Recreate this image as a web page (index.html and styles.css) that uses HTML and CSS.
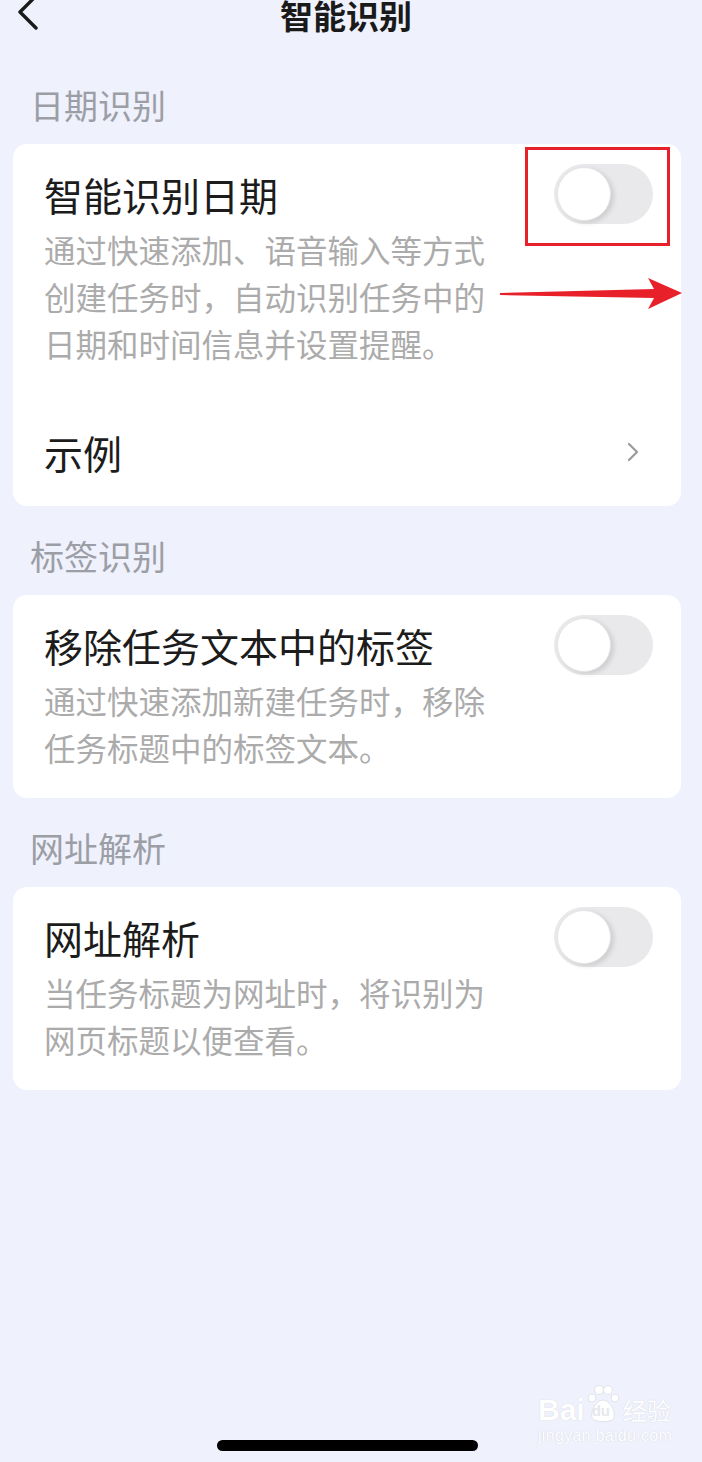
FILE: index.html
```html
<!DOCTYPE html>
<html>
<head>
    <meta charset="utf-8">
    <title>智能识别</title>
    <link rel="stylesheet" href="styles.css">
</head>
<body>
    <div class="topbar">
        <svg class="back" width="30" height="32" viewBox="0 0 30 32">
            <polyline points="20,-2 4,14 20,30" fill="none" stroke="#1a1a1a" stroke-width="3.4" stroke-linecap="round" stroke-linejoin="round"/>
        </svg>
        <h1>智能识别</h1>
        <span></span>
    </div>

    <div class="section-label">日期识别</div>
    <div class="card">
        <div class="item">
            <div class="text">
                <div class="title">智能识别日期</div>
                <div class="desc">通过快速添加、语音输入等方式创建任务时，自动识别任务中的日期和时间信息并设置提醒。</div>
            </div>
            <div class="switch"><div class="knob"></div></div>
        </div>
        <div class="link-row">
            <span class="title">示例</span>
            <svg width="14" height="22" viewBox="0 0 14 22">
                <polyline points="3,3 11,11 3,19" fill="none" stroke="#9a9a9a" stroke-width="2.2" stroke-linecap="round" stroke-linejoin="round"/>
            </svg>
        </div>
        <!-- annotation overlay -->
        <div class="mark-box"></div>
        <svg class="mark-arrow" width="200" height="36" viewBox="0 0 200 36">
            <polygon points="14,17 168,13 162,2 196,17 162,33 168,22 14,19" fill="#e8202a"/>
        </svg>
    </div>

    <div class="section-label">标签识别</div>
    <div class="card">
        <div class="item">
            <div class="text">
                <div class="title">移除任务文本中的标签</div>
                <div class="desc">通过快速添加新建任务时，移除任务标题中的标签文本。</div>
            </div>
            <div class="switch"><div class="knob"></div></div>
        </div>
    </div>

    <div class="section-label">网址解析</div>
    <div class="card">
        <div class="item">
            <div class="text">
                <div class="title">网址解析</div>
                <div class="desc">当任务标题为网址时，将识别为网页标题以便查看。</div>
            </div>
            <div class="switch"><div class="knob"></div></div>
        </div>
    </div>

    <div class="watermark">
        <div class="wm-top">
            <span>Bai</span>
            <span class="paw">
                <svg width="34" height="40" viewBox="0 0 34 40">
                    <circle cx="6" cy="14" r="4" fill="#fff" stroke="#e2e3ea"/>
                    <circle cx="13" cy="6" r="4.5" fill="#fff" stroke="#e2e3ea"/>
                    <circle cx="22" cy="6" r="4.5" fill="#fff" stroke="#e2e3ea"/>
                    <circle cx="29" cy="14" r="4" fill="#fff" stroke="#e2e3ea"/>
                    <path d="M17 16 C10 16 4 28 6 34 C8 39 26 39 28 34 C30 28 24 16 17 16 Z" fill="#fff" stroke="#e2e3ea"/>
                </svg>
                <i>du</i>
            </span>
            <span class="wm-cn">经验</span>
        </div>
        <div class="wm-url">jingyan.baidu.com</div>
    </div>

    <div class="home-bar"></div>
</body>
</html>
```

FILE: styles.css
```css
html, body {
    margin: 0;
    padding: 0;
}
body {
    background-color: #eff1fc;
    font-family: "Noto Sans CJK SC", "Noto Sans", sans-serif;
    height: 1462px;
    overflow: hidden;
    display: flex;
    flex-direction: column;
    position: relative;
}
.topbar {
    height: 29px;
    margin-bottom: 26px;
    display: grid;
    grid-template-columns: 1fr auto 1fr;
    align-items: center;
}
.back {
    margin-left: 16px;
    margin-top: -2px;
}
h1 {
    margin: 0;
    font-size: 33px;
    font-weight: 600;
    line-height: 29px;
    color: #1a1a1a;
    position: relative;
    left: -5px;
}
.section-label {
    font-size: 34px;
    line-height: 34px;
    color: #9c9ea6;
    margin: 33px 0 22px 30px;
}
.card {
    position: relative;
    background: #fff;
    border-radius: 14px;
    margin: 0 21px 0 13px;
}
.item {
    display: flex;
    justify-content: space-between;
    align-items: flex-start;
    padding: 20px 28px 27px 31px;
}
.text {
    padding-top: 7px;
    max-width: 450px;
}
.title {
    font-size: 39px;
    line-height: 46px;
    color: #1c1c1c;
}
.desc {
    margin-top: 9px;
    font-size: 31.5px;
    line-height: 47px;
    color: #ababab;
}
.switch {
    flex: none;
    width: 99px;
    height: 60px;
    border-radius: 30px;
    background: #e9e9eb;
    position: relative;
}
.knob {
    position: absolute;
    left: 3px;
    top: 3px;
    width: 54px;
    height: 54px;
    border-radius: 50%;
    background: #fff;
    box-sizing: border-box;
    border: 1px solid #e6e6e8;
    box-shadow: 3px 2px 5px rgba(0, 0, 0, 0.12);
}
.link-row {
    height: 112px;
    padding: 4px 41px 0 31px;
    box-sizing: border-box;
    display: flex;
    align-items: center;
    justify-content: space-between;
}
.mark-box {
    position: absolute;
    left: 512px;
    top: 3px;
    width: 145px;
    height: 99px;
    box-sizing: border-box;
    border: 3px solid #e8202a;
}
.mark-arrow {
    position: absolute;
    left: 473px;
    top: 132px;
}
.watermark {
    position: absolute;
    left: 538px;
    top: 1382px;
    color: #fff;
    font-family: "Liberation Sans", Arial, sans-serif;
    text-shadow: 0 0 1px rgba(120, 125, 150, 0.35);
}
.wm-top {
    display: flex;
    align-items: flex-end;
    height: 44px;
    font-size: 30px;
    font-weight: bold;
    line-height: 32px;
}
.paw {
    position: relative;
    width: 36px;
    height: 42px;
}
.paw svg {
    position: absolute;
    left: 1px;
    top: 0;
}
.paw i {
    position: absolute;
    left: 7px;
    top: 19px;
    font-style: normal;
    font-size: 15px;
    line-height: 16px;
    color: #e6e7ee;
    text-shadow: none;
}
.wm-cn {
    font-family: "Noto Sans CJK SC", sans-serif;
    font-size: 24px;
    font-weight: normal;
    margin-left: 2px;
}
.wm-url {
    font-size: 16px;
    line-height: 20px;
    letter-spacing: 0.3px;
}
.home-bar {
    margin: auto 0 11px 217px;
    width: 261px;
    height: 11px;
    border-radius: 6px;
    background: #000;
}
```
